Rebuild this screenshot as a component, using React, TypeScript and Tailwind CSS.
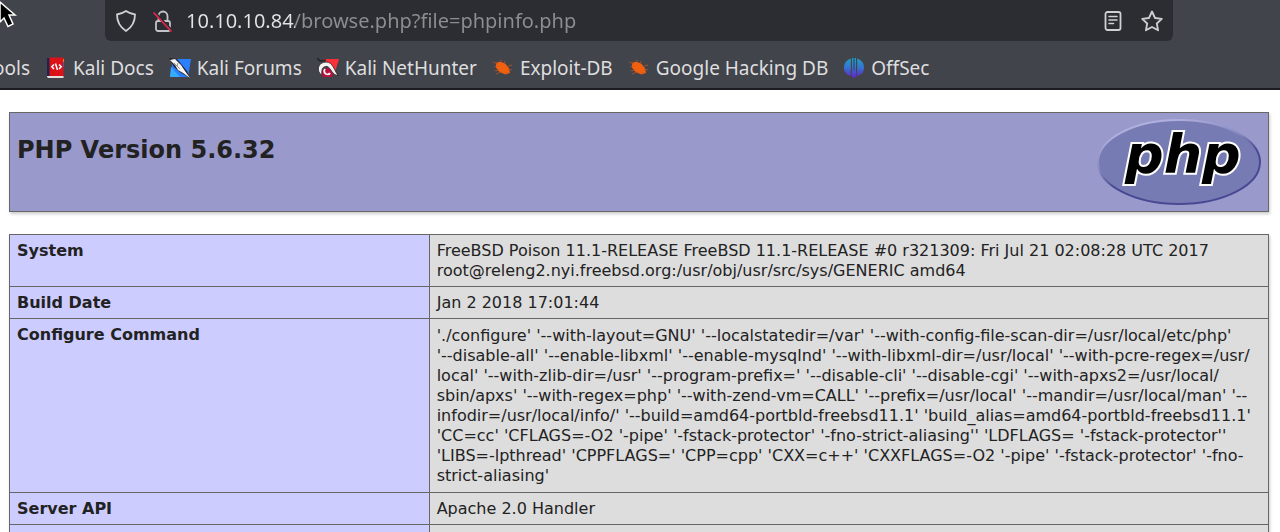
import React from "react";

type Bookmark = { label: string; icon: React.ReactNode };

function DocsIcon() {
  return (
    <svg width="20" height="22" viewBox="0 0 20 22" aria-hidden="true">
      <path d="M1 1h3v18H1z" fill="#1c2450" />
      <path d="M3.500 0.500h14v18.500h-14z" fill="#dc1218" />
      <path d="M17 2h1v3h-1z" fill="#c9882c" />
      <path d="M17 5h1v5h-1z" fill="#4b58a8" />
      <path d="M1 19h16.500v2H2.500Q1 21 1 19z" fill="#e8dede" />
      <path d="M8 7.500 5.800 9.800 8 12M13 7.500l2.200 2.300L13 12M9.500 6.500l2 6.500" fill="none" stroke="#fff" strokeWidth="1.500" />
    </svg>
  );
}

function ForumsIcon() {
  return (
    <svg width="22" height="20" viewBox="0 0 22 20" aria-hidden="true">
      <path d="M4 1h18l-3 18H1z" fill="#2a7fff" />
      <path d="M1 19 2 9l9 10z" fill="#35aaff" />
      <path d="M0 0 8 1l10 12 3 7-9-5-7-6z" fill="#20242b" />
      <path d="M1 2 6 1l6 6 4 6 5 7-7-5-5-3-3-5z" fill="#f4f4f2" />
      <path d="m5 5 6 6M8 8l1-3" stroke="#777" strokeWidth="0.800" />
    </svg>
  );
}

function NetHunterIcon() {
  return (
    <svg width="22" height="20" viewBox="0 0 22 20" aria-hidden="true">
      <path d="M6 1h16l-4 13z" fill="#fb3038" />
      <path d="M2 14 6 19h9l2-5-5-5z" fill="#b80f3c" />
      <path d="M0 0 3 3 9 2" stroke="#22242a" strokeWidth="1.500" fill="none" />
      <path d="M5 17.500C-1.500 13 1 4 9 4c7 0 8 8 12 13.500-6 0-7-8-11-9C6 8 4 11 5 17.500z" fill="#f5f2f2" stroke="#1c1d22" strokeWidth="0.800" />
      <path d="M8 11q-2 3 1 5 3 1 4-1" stroke="#f5f2f2" strokeWidth="1.800" fill="none" />
    </svg>
  );
}

function BugIcon() {
  return (
    <svg width="20" height="18" viewBox="0 0 20 18" aria-hidden="true">
      <path d="M3 4q2-1.500 5-1 5 1 6 4l2 2 1 5-2 .500-2 1-3-1-4-2-3-4z" fill="#f0600f" />
      <path d="M5 5 0 3m4 4-3 1m5 3-4 1m6 1-5 2M9 4 7 1m5 3 0-2m3 5 4-1m-4 4 4 1m-6 2 1 2" stroke="#b9541f" strokeWidth="0.800" fill="none" />
    </svg>
  );
}

function OffSecIcon() {
  return (
    <svg width="20" height="22" viewBox="0 0 20 22" aria-hidden="true">
      <defs>
        <linearGradient id="offsec" gradientUnits="userSpaceOnUse" x1="0" y1="0" x2="0" y2="21">
          <stop offset="0" stopColor="#18a8c4" />
          <stop offset="0.500" stopColor="#3474d2" />
          <stop offset="1" stopColor="#6820c8" />
        </linearGradient>
      </defs>
      <g fill="url(#offsec)">
        <path d="M6.800 1.500v17.500C2.500 18 0 14.500 0 10.500S2.500 3 6.800 1.500z" />
        <path d="M13.200 1.500v17.500C17.500 18 20 14.500 20 10.500S17.500 3 13.200 1.500z" />
        <path d="M8 1h1.400v13L10 13l.600 1V1H12v13l.500 5-2.500 2.500L7.500 19 8 14z" />
      </g>
    </svg>
  );
}

function PhpLogo() {
  return (
    <svg width="164" height="86" viewBox="0 0 164 86" role="img" aria-label="PHP logo">
      <defs>
        <linearGradient id="rim" x1="0.200" y1="0" x2="0.700" y2="1">
          <stop offset="0.100" stopColor="#b0b0de" />
          <stop offset="0.400" stopColor="#8789be" />
          <stop offset="0.600" stopColor="#484893" />
        </linearGradient>
      </defs>
      <ellipse cx="82" cy="43" rx="81" ry="42" fill="#777bb3" stroke="url(#rim)" strokeWidth="2" />
      <text
        x="28"
        y="54"
        fontFamily="'DejaVu Sans', sans-serif"
        fontSize="54"
        fontWeight="700"
        fontStyle="italic"
        fill="#000"
        stroke="#fff"
        strokeWidth="4"
        strokeLinejoin="miter"
        paintOrder="stroke"
      >
        php
      </text>
    </svg>
  );
}

const bookmarks: Bookmark[] = [
  { label: "Kali Docs", icon: <DocsIcon /> },
  { label: "Kali Forums", icon: <ForumsIcon /> },
  { label: "Kali NetHunter", icon: <NetHunterIcon /> },
  { label: "Exploit-DB", icon: <BugIcon /> },
  { label: "Google Hacking DB", icon: <BugIcon /> },
  { label: "OffSec", icon: <OffSecIcon /> },
];

const rows: { name: string; value: string }[] = [
  {
    name: "System",
    value:
      "FreeBSD Poison 11.1-RELEASE FreeBSD 11.1-RELEASE #0 r321309: Fri Jul 21 02:08:28 UTC 2017\nroot@releng2.nyi.freebsd.org:/usr/obj/usr/src/sys/GENERIC amd64",
  },
  { name: "Build Date", value: "Jan 2 2018 17:01:44" },
  {
    name: "Configure Command",
    value: [
      "'./configure' '--with-layout=GNU' '--localstatedir=/var' '--with-config-file-scan-dir=/usr/local/etc/php'",
      "'--disable-all' '--enable-libxml' '--enable-mysqlnd' '--with-libxml-dir=/usr/local' '--with-pcre-regex=/usr/",
      "local' '--with-zlib-dir=/usr' '--program-prefix=' '--disable-cli' '--disable-cgi' '--with-apxs2=/usr/local/",
      "sbin/apxs' '--with-regex=php' '--with-zend-vm=CALL' '--prefix=/usr/local' '--mandir=/usr/local/man' '--",
      "infodir=/usr/local/info/' '--build=amd64-portbld-freebsd11.1' 'build_alias=amd64-portbld-freebsd11.1'",
      "'CC=cc' 'CFLAGS=-O2 '-pipe' '-fstack-protector' '-fno-strict-aliasing'' 'LDFLAGS= '-fstack-protector''",
      "'LIBS=-lpthread' 'CPPFLAGS=' 'CPP=cpp' 'CXX=c++' 'CXXFLAGS=-O2 '-pipe' '-fstack-protector' '-fno-",
      "strict-aliasing'",
    ].join("\n"),
  },
  { name: "Server API", value: "Apache 2.0 Handler" },
  { name: "", value: "" },
];

function Toolbar() {
  return (
    <header className="relative border-b-2 border-[#1c1b22] bg-[#42444c] font-['Noto_Sans',sans-serif] text-[#dededf]">
      <svg className="absolute left-0 top-0" width="18" height="30" viewBox="0 0 18 30" aria-hidden="true">
        <path d="M0 2 15 15H9l4 9-5 2.500L4 18l-4 4z" fill="#000" stroke="#fff" strokeWidth="1.500" />
      </svg>
      <div className="ml-[105px] mr-[107px] flex h-[41px] items-center rounded-b-md bg-[#2c2d32] pl-[11px] pr-[9px]">
        <button type="button" aria-label="Tracking protection" className="mr-4">
          <svg width="20" height="22" viewBox="0 0 20 22" fill="none" stroke="#d0d0d2" strokeWidth="1.800" strokeLinejoin="round">
            <path d="M10 1c3 2 6 3 9 3.500 0 7-2 12-9 16.500C3 16.500 1 11.500 1 4.500 4 4 7 3 10 1z" />
          </svg>
        </button>
        <button type="button" aria-label="Connection not secure" className="mr-3">
          <svg width="22" height="24" viewBox="0 0 22 24" fill="none" stroke="#c4c4c6" strokeWidth="1.800">
            <rect x="4" y="12" width="14" height="10" rx="2" />
            <path d="M6.500 12V7a4.500 4.500 0 0 1 9 0v5" />
            <path d="m2 3 18 19" stroke="#2c2d32" strokeWidth="3" />
            <path d="m1.500 3.500 18 19" stroke="#e22850" strokeWidth="1.800" />
          </svg>
        </button>
        <input
          aria-label="Address"
          defaultValue="10.10.10.84/browse.php?file=phpinfo.php"
          className="h-8 min-w-0 flex-1 bg-[linear-gradient(90deg,#e4e4e6_109px,#8d8d92_109px)] bg-clip-text text-xl text-transparent outline-none"
        />
        <button type="button" aria-label="Reader view" className="mr-4">
          <svg width="22" height="22" viewBox="0 0 22 22" fill="none" stroke="#d0d0d2" strokeWidth="1.800" strokeLinecap="round">
            <rect x="3.500" y="2" width="15" height="18" rx="2" />
            <path d="M7 6.500h8M7 10h8M7 13.500h4.500" strokeWidth="1.500" />
          </svg>
        </button>
        <button type="button" aria-label="Bookmark this page">
          <svg width="24" height="24" viewBox="0 0 24 24" fill="none" stroke="#d0d0d2" strokeWidth="1.800" strokeLinejoin="round">
            <path d="m12 2.500 3 6.500 6.800.800-5 4.700 1.300 6.800-6.100-3.300-6.100 3.300 1.300-6.800-5-4.700L9 9z" />
          </svg>
        </button>
      </div>
      <nav aria-label="Bookmarks" className="flex h-[47px] items-center gap-[15px] pb-px pt-[7px] text-[19px] leading-6">
        <a href="#tools" className="flex w-[30px] shrink-0 justify-end overflow-hidden">
          ools
        </a>
        {bookmarks.map((b) => (
          <a key={b.label} href="#bookmark" className="flex shrink-0 items-center gap-1.5 whitespace-nowrap">
            <span className="flex w-[22px] justify-center">{b.icon}</span>
            {b.label}
          </a>
        ))}
      </nav>
    </header>
  );
}

export default function App() {
  return (
    <div className="h-screen overflow-hidden bg-white">
      <Toolbar />
      <main className="pl-[9px] pr-[11px] pt-[22px] font-['DejaVu_Sans',sans-serif] text-[#222]">
        <section className="mb-[22px] flex items-start justify-between border border-[#666] bg-[#9999cc] px-[7px] py-[6px] shadow-[1px_2px_3px_#ccc]">
          <h1 className="pt-[17px] text-2xl font-bold leading-7">PHP Version 5.6.32</h1>
          <PhpLogo />
        </section>
        <table className="w-full table-fixed border-collapse text-base leading-5 shadow-[1px_2px_3px_#ccc]">
          <colgroup>
            <col className="w-1/3" />
            <col />
          </colgroup>
          <tbody>
            {rows.map((row) => (
              <tr key={row.name} className={row.value.length > 200 ? "h-[174px]" : "h-8"}>
                <th scope="row" className="border border-[#666] bg-[#ccccff] px-[7px] pb-[5px] pt-[6px] text-left align-top font-bold">
                  {row.name}
                </th>
                <td className="whitespace-pre-line border border-[#666] bg-[#dddddd] px-[7px] pb-[5px] pt-[6px] align-middle">
                  {row.value}
                </td>
              </tr>
            ))}
          </tbody>
        </table>
      </main>
    </div>
  );
}
